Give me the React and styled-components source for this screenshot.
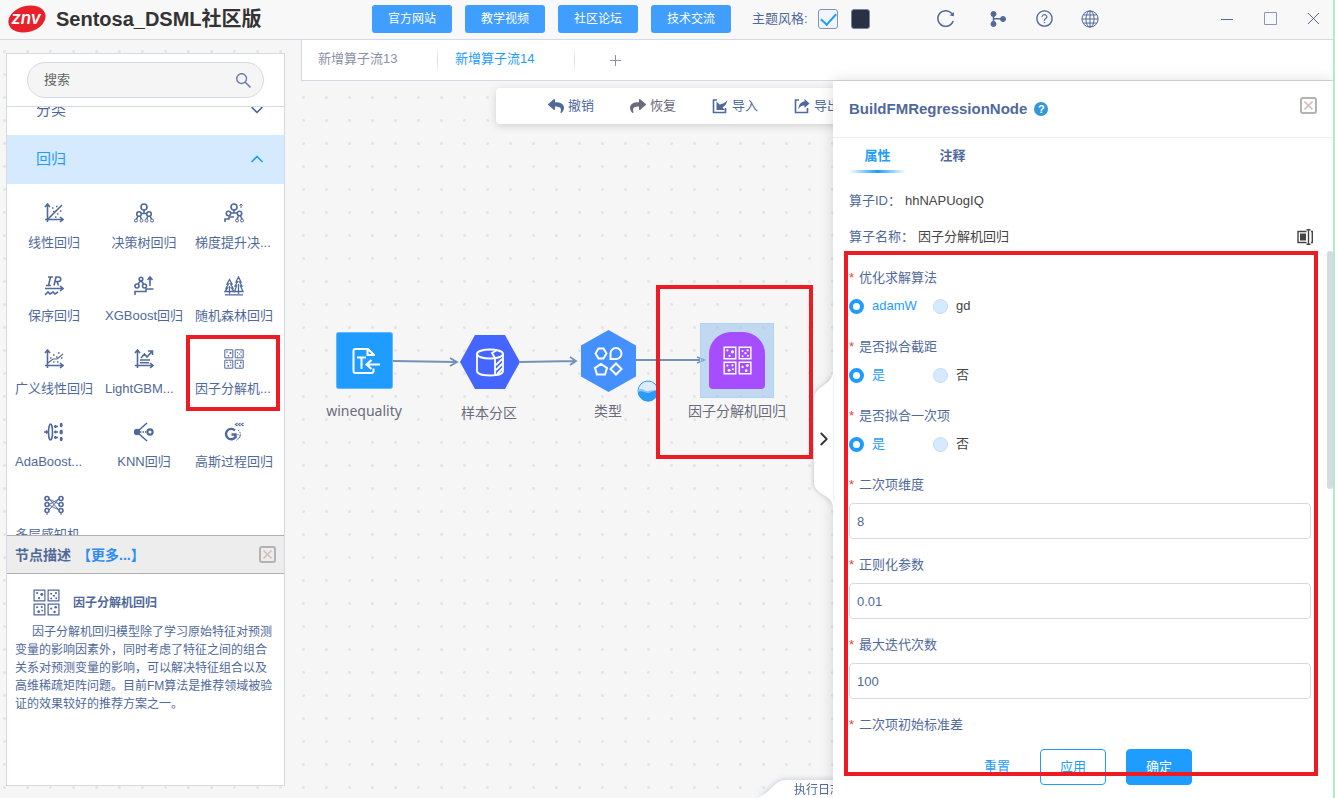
import React, { useState } from "react";
import styled, { createGlobalStyle } from "styled-components";
import { AiOutlineSearch, AiOutlineReload, AiOutlineQuestionCircle } from "react-icons/ai";
import { FaReply, FaShare } from "react-icons/fa";
import { FiChevronDown, FiChevronUp, FiChevronRight } from "react-icons/fi";

const GlobalStyle = createGlobalStyle`
* {
  box-sizing: border-box;
}

body {
  margin: 0;
  font-family: "Liberation Sans", "Noto Sans CJK SC", sans-serif;
  font-size: 13px;
  line-height: 18px;
  color: #50699b;
}

button, input {
  font: inherit;
  color: inherit;
  margin: 0;
}

button {
  padding: 0;
  border: none;
  background: none;
  cursor: pointer;
}

svg {
  display: block;
  flex: none;
}
`;

/* ---------- icons ---------- */

const Line = ({ size = 20, width = 1.6, children }) => (
  <svg width={size} height={size} viewBox="0 0 20 20" fill="none" stroke="currentColor" strokeWidth={width}>
    {children}
  </svg>
);

const Axes = () => <path d="M3.5 1v18M1 16.5h17M1 4l2.500-3L6 4M16 14l3 2.500-3 2.500" />;

const LinearIcon = () => (
  <Line>
    <Axes />
    <path d="M4 16L18 2" />
    <path d="M8 5h1.500M12 3.500h1.500M9 8.500h1.500M13 11h1.500M16 8h1.500M11 14h1.500" strokeWidth="1.300" />
  </Line>
);

const TreeIcon = () => (
  <Line>
    <circle cx="10" cy="4" r="3" />
    <circle cx="5" cy="11" r="2.300" />
    <circle cx="15" cy="11" r="2.300" />
    <path d="M10 7v3M7 10.500h6M4 13l-1.500 3M6 13l1.500 3M14 13l-1.500 3M16 13l1.500 3" />
    <g strokeWidth="1">
      <circle cx="2" cy="17.500" r="1.500" />
      <circle cx="7.500" cy="17.500" r="1.500" />
      <circle cx="12.500" cy="17.500" r="1.500" />
      <circle cx="18" cy="17.500" r="1.500" />
    </g>
  </Line>
);

const GradientTreeIcon = () => (
  <Line>
    <circle cx="10" cy="4" r="3" />
    <circle cx="4.500" cy="10.500" r="2.200" />
    <circle cx="15.500" cy="10.500" r="2.200" />
    <path d="M10 7v3M7 10h6M1 19v-3h4v-2h5M14.500 13l-1.500 3M16.500 13l1.500 3" />
    <path d="M17 5V1M15.500 2.500L17 1l1.500 1.500" strokeWidth="1" />
    <circle cx="13" cy="17.500" r="1.500" strokeWidth="1" />
    <circle cx="18" cy="17.500" r="1.500" strokeWidth="1" />
  </Line>
);

const IsotonicIcon = () => (
  <Line>
    <path d="M4 1h5M2 9.500h5M6.500 1l-2 8.500M10 9.500L12 1h2.500a2 2 0 0 1 0 4.500H11M13 5.500l1.500 4" />
    <path d="M1 12.500h17M16 10l3 2.500-3 2.500M1 19l3-3 2 2 3-2 2 2 3-2" />
  </Line>
);

const XGBoostIcon = () => (
  <Line>
    <circle cx="7" cy="3" r="1.800" />
    <circle cx="3" cy="10" r="2" />
    <circle cx="10.500" cy="10" r="2" />
    <path d="M6.500 5L4 8M7.500 5l2 3M16 10V1.500M13.500 4L16 1l2.500 3M1 19v-3.500h11V13h7.500" />
  </Line>
);

const ForestIcon = () => (
  <Line width={1.3}>
    <path d="M5.500 3.500L3 8h1.500L2 12h1.500L1 15.500h9L7.500 12H9L6.500 8H8zM5.500 10v8" />
    <path d="M14.500 1L12 6h1.500L11 10h1.500l-2 5.500H19L16.500 10H18l-2.500-4H17zM14.500 8v10M1 18.800h18" />
  </Line>
);

const GeneralLinearIcon = () => (
  <Line>
    <Axes />
    <path d="M4 14l5-4h4l6-5" strokeWidth="1.100" />
    <path d="M6 9h1.500M9 6h1.500M14 4h1.500M9 13h1.500M13 13h1.500M17 9h1.500M12 8h1.500" strokeWidth="1.300" />
  </Line>
);

const LightGBMIcon = () => (
  <Line>
    <Axes />
    <path d="M7 9l3.500-4 2.500 3 5-5.500M14 2h4.500v4M6 11h10M6 13.800h9" />
  </Line>
);

const FMIcon = ({ size = 20, width = 1 }) => (
  <Line size={size} width={width}>
    <path d="M.8.8h8v8h-8zM11.200.8h8v8h-8zM.8 11.200h8v8h-8zM11.200 11.200h8v8h-8z" />
    <g fill="currentColor" stroke="none">
      <circle cx="3" cy="3" r=".8" />
      <circle cx="6.500" cy="4" r="1.100" />
      <circle cx="4.500" cy="6.800" r=".8" />
      <circle cx="13.500" cy="3.500" r=".7" />
      <circle cx="17" cy="3" r=".8" />
      <circle cx="15.500" cy="5" r=".8" />
      <circle cx="13.500" cy="7" r=".7" />
      <circle cx="17.200" cy="6.800" r=".7" />
      <circle cx="3" cy="13.500" r=".8" />
      <circle cx="6.500" cy="13.300" r=".8" />
      <circle cx="4.200" cy="16.800" r="1" />
      <circle cx="6.800" cy="16" r=".7" />
      <circle cx="16.800" cy="13.500" r="1" />
      <circle cx="13.500" cy="14.500" r=".8" />
      <circle cx="16" cy="17" r=".9" />
    </g>
  </Line>
);

const AdaBoostIcon = () => (
  <Line>
    <path d="M0 10h3M2 8.500L3.500 10 2 11.500M10 4.500h4M10 10h4M10 15.500h4" />
    <ellipse cx="6.500" cy="10" rx="2" ry="8" />
    <path d="M11.500 3v3M11.500 8.500v3M11.500 14v3" />
    <ellipse cx="17.200" cy="3" rx="1.500" ry="2.300" fill="currentColor" stroke="none" />
    <ellipse cx="17.200" cy="10" rx="1.700" ry="2.500" fill="currentColor" stroke="none" />
    <ellipse cx="17.200" cy="17" rx="1.500" ry="2.300" fill="currentColor" stroke="none" />
  </Line>
);

const KNNIcon = () => (
  <Line>
    <circle cx="3" cy="10" r="2.400" fill="currentColor" />
    <circle cx="16" cy="10" r="2.600" strokeWidth="2.200" />
    <path d="M4 9l9-8M4 11l9 8" />
    <path d="M6 10h6" strokeDasharray="1.500 1" />
  </Line>
);

const GaussIcon = () => (
  <Line>
    <path d="M11 8.500A5.200 5.200 0 1 0 11.500 15v-2.500H7.500" strokeWidth="2.400" />
    <path d="M13.500 1L11.500 2.500l2 1.500M16.500 1l-2 1.500 2 1.500M19.500 1l-2 1.500 2 1.500" strokeWidth="1.200" />
    <path d="M14 8c4 3 3 8-2 10.500" strokeDasharray="1.500 1" strokeWidth="1" />
    <circle cx="14" cy="14.500" r="2" strokeDasharray="1 1" strokeWidth="1" />
  </Line>
);

const PerceptronIcon = () => (
  <Line>
    {[3.5, 9.5, 15.5].map((y) => (
      <g key={y}>
        <circle cx="3" cy={y} r="2" />
        <circle cx="17" cy={y} r="2" />
      </g>
    ))}
    <path d="M5 4l10 11M5 15L15 4M5 10l10 5M5 9.500L15 4M5 4l10 5M3 17.500V20M17 17.500V20" strokeWidth="1" />
  </Line>
);

const Logo = () => (
  <svg width="38" height="30" viewBox="0 0 38 30">
    <ellipse cx="19" cy="15" rx="19" ry="13" fill="#e8202a" transform="rotate(-16 19 15)" />
    <text x="18" y="20" fill="#fff" fontFamily="Inter, sans-serif" fontSize="17" fontWeight="600" fontStyle="italic" textAnchor="middle">
      znv
    </text>
  </svg>
);

const BranchIcon = () => (
  <svg width="16" height="16" viewBox="0 0 16 16" fill="currentColor" stroke="currentColor">
    <circle cx="3.500" cy="3" r="2.500" />
    <circle cx="3.500" cy="13" r="2.500" />
    <circle cx="13" cy="8" r="2.500" />
    <path d="M3.500 3v10M3.500 7.500L13 8" strokeWidth="1.500" />
  </svg>
);

const GlobeIcon = () => (
  <Line size={18} width={1.1}>
    <circle cx="10" cy="10" r="9" />
    <ellipse cx="10" cy="10" rx="4.500" ry="9" />
    <path d="M10 1v18M1 10h18M2.500 5.500h15M2.500 14.500h15" />
  </Line>
);

const TransferIcon = ({ out }) => (
  <svg width="16" height="16" viewBox="0 0 16 16" fill="none" stroke="currentColor" strokeWidth="1.600">
    <path d="M5 2H1.500v12.500h12V10" />
    {out ? (
      <path d="M10.500 1l5 4.500-5 4.500V7.500C7.500 7.500 6 8.500 4.500 11c0-4 2-7 6-7.500z" fill="currentColor" stroke="none" />
    ) : (
      <path d="M4.500 3.500v8.500h8.500L10.500 9.500c2.500-1.500 4-3.500 5-7.500-2.500 3-5 4-8 4.500z" fill="currentColor" stroke="none" />
    )}
  </svg>
);

const Cross = () => (
  <svg width="9" height="9" viewBox="0 0 9 9" stroke="#d8bfbf" strokeWidth="1.600">
    <path d="M.5.5l8 8M8.500.5l-8 8" />
  </svg>
);

const RenameIcon = () => (
  <svg width="16" height="16" viewBox="0 0 16 16" fill="none" stroke="#444" strokeWidth="1.400">
    <path d="M9.500 2.500H1v11h8.500M14 2.500h1.300v11H14M9.500.8h4M9.500 15.200h4M11.500 1v14" />
    <path d="M3 4.500h6v7H3z" fill="#444" stroke="none" />
  </svg>
);

/* ---------- data ---------- */

const links = ["官方网站", "教学视频", "社区论坛", "技术交流"];

const operators = [
  { name: "线性回归", Icon: LinearIcon },
  { name: "决策树回归", Icon: TreeIcon },
  { name: "梯度提升决...", Icon: GradientTreeIcon },
  { name: "保序回归", Icon: IsotonicIcon },
  { name: "XGBoost回归", Icon: XGBoostIcon },
  { name: "随机森林回归", Icon: ForestIcon },
  { name: "广义线性回归", Icon: GeneralLinearIcon },
  { name: "LightGBM...", Icon: LightGBMIcon },
  { name: "因子分解机...", Icon: FMIcon, marked: true },
  { name: "AdaBoost...", Icon: AdaBoostIcon },
  { name: "KNN回归", Icon: KNNIcon },
  { name: "高斯过程回归", Icon: GaussIcon },
  { name: "多层感知机...", Icon: PerceptronIcon },
];

const choices = [
  { id: "solver", label: "优化求解算法", options: ["adamW", "gd"] },
  { id: "intercept", label: "是否拟合截距", options: ["是", "否"] },
  { id: "linear", label: "是否拟合一次项", options: ["是", "否"] },
];

const fields = [
  { id: "factor", label: "二次项维度", value: "8" },
  { id: "reg", label: "正则化参数", value: "0.01" },
  { id: "iter", label: "最大迭代次数", value: "100" },
];

const App = () => {
  const [tab, setTab] = useState(1);
  const [picked, setPicked] = useState({ solver: "adamW", intercept: "是", linear: "是" });

  return (
    <Page>
      <GlobalStyle />
      <Header>
        <Brand>
          <Logo />
          <Title>Sentosa_DSML社区版</Title>
        </Brand>
        <Links>
          {links.map((l) => (
            <LinkButton key={l}>{l}</LinkButton>
          ))}
        </Links>
        <Theme>
          <label htmlFor="light">主题风格:</label>
          <CheckBox id="light" type="checkbox" defaultChecked />
          <Swatch aria-label="深色" />
        </Theme>
        <Tools>
          <ToolButton aria-label="刷新"><AiOutlineReload size={21} /></ToolButton>
          <ToolButton aria-label="流程"><BranchIcon /></ToolButton>
          <ToolButton aria-label="帮助"><AiOutlineQuestionCircle size={19} /></ToolButton>
          <ToolButton aria-label="语言"><GlobeIcon /></ToolButton>
        </Tools>
        <WindowTools>
          <ToolButton aria-label="最小化">
            <svg width="13" height="13" stroke="currentColor"><path d="M0 7.500h12" /></svg>
          </ToolButton>
          <ToolButton aria-label="最大化">
            <svg width="13" height="13" stroke="#8c96bb" fill="none"><path d="M.5.5h12v12H.5z" /></svg>
          </ToolButton>
          <ToolButton aria-label="关闭">
            <svg width="13" height="13" stroke="currentColor"><path d="M1 1l11 11M12 1L1 12" /></svg>
          </ToolButton>
        </WindowTools>
      </Header>

      <Body>
        <Side>
          <SearchBar>
            <SearchBox>
              <input type="text" placeholder="搜索" aria-label="搜索" />
              <AiOutlineSearch size={19} color="#6b7db3" />
            </SearchBox>
          </SearchBar>
          <Palette>
            <Category $first>
              分类 <FiChevronDown size={20} />
            </Category>
            <Category $open>
              回归 <FiChevronUp size={20} />
            </Category>
            <Grid>
              {operators.map(({ name, Icon, marked }) => (
                <Operator key={name} $cut={name.endsWith("...")}>
                  <Icon />
                  <span>{name}</span>
                  {marked && <OperatorMark />}
                </Operator>
              ))}
            </Grid>
          </Palette>
          <InfoHead>
            <b>节点描述</b>
            <a href="#more">【更多...】</a>
            <CloseButton aria-label="关闭描述"><Cross /></CloseButton>
          </InfoHead>
          <Info>
            <InfoTitle>
              <FMIcon size={27} width={0.9} />
              <b>因子分解机回归</b>
            </InfoTitle>
            <p>
              因子分解机回归模型除了学习原始特征对预测变量的影响因素外，同时考虑了特征之间的组合关系对预测变量的影响，可以解决特征组合以及高维稀疏矩阵问题。目前FM算法是推荐领域被验证的效果较好的推荐方案之一。
            </p>
          </Info>
        </Side>

        <Main>
          <Flows>
            {["新增算子流13", "新增算子流14"].map((t, i) => (
              <Flow key={t} $active={tab === i} onClick={() => setTab(i)}>{t}</Flow>
            ))}
            <AddFlow aria-label="新增">
              <svg width="11" height="11" stroke="currentColor"><path d="M5.500 0v11M0 5.500h11" /></svg>
            </AddFlow>
          </Flows>

          <Work>
            <Canvas>
              <ActionBar>
                <Action><FaReply size={16} />撤销</Action>
                <Action $muted><FaShare size={16} />恢复</Action>
                <Action><TransferIcon />导入</Action>
                <Action><TransferIcon out />导出</Action>
              </ActionBar>

              <Edges width="420" height="330" fill="none" stroke="#7492b8" strokeWidth="1.800">
                <path d="M92 280l63 1M149 277l7 4-7 4" />
                <path d="M219 281l55-1M269 276l6 4-6 4" />
                <path d="M335 279h67M396 276l7 3-7 3" />
              </Edges>

              <Node $x={35} $y={251}>
                <svg width="57" height="57" fill="none" stroke="#fff" strokeWidth="2">
                  <rect x=".5" y=".5" width="56" height="56" rx="2" fill="#1e9cff" stroke="#62b8ff" strokeWidth="1" />
                  <path d="M38 24v-1l-6-6H19.500a2 2 0 0 0-2 2v20a2 2 0 0 0 2 2h16a2 2 0 0 0 2-2v-2.500M31.500 17v6H38M21 25.500h9M25.500 25.500V37M44 32.500H32M35.500 28l-5 4.500 5 4.500" />
                </svg>
              </Node>
              <NodeName $x={63} $y={321}>winequality</NodeName>

              <Node $x={159} $y={254}>
                <svg width="60" height="54" fill="none" stroke="#fff" strokeWidth="2">
                  <path d="M15 0h30l15 27-15 27H15L0 27z" fill="#4465ff" stroke="none" />
                  <ellipse cx="30" cy="19" rx="13" ry="4.500" />
                  <path d="M17 19v17c0 6 26 6 26 0V19M35 23v17M35 23l-3-5 5-3M36 30l6-6M36 35l7-7M37 39l6-6" strokeWidth="1.800" />
                </svg>
              </Node>
              <NodeName $x={188} $y={323}>样本分区</NodeName>

              <Node $x={280} $y={249}>
                <svg width="55" height="62" fill="none" stroke="#fff" strokeWidth="2">
                  <path d="M27.500 0L55 15.500v31L27.500 62 0 46.500v-31z" fill="#4590ff" stroke="none" />
                  <path d="M17.500 18.500h5l3 5-3 5h-5l-3-5zM29.500 29v-5.500a5.500 5.500 0 1 1 5.500 5.500zM20 34l6 4-2 6.500h-8L14 38zM35 33.500l5.500 5.500-5.500 5.500-5.500-5.500z" />
                </svg>
              </Node>
              <NodeName $x={307} $y={321}>类型</NodeName>

              <Node $x={336} $y={299}>
                <svg width="22" height="22">
                  <circle cx="11" cy="11" r="10" fill="#dcecfa" stroke="#2b9cf5" />
                  <path d="M1 10c5-3 7 2 10 1s6-1 10-1a10 10 0 0 1-20 0z" fill="#8ac6f8" />
                  <path d="M1 12c4-2 7 1 10 1s6-3 10-2a10 10 0 0 1-20 1z" fill="#2b9cf5" />
                </svg>
              </Node>

              <Selected $x={399} $y={242}>
                <Factor><FMIcon size={29} width={1} /></Factor>
              </Selected>
              <NodeName $x={436} $y={321}>因子分解机回归</NodeName>

              <LogTab>
                <svg width="140" height="18" fill="#fff">
                  <path d="M0 18C14 14 16 0 30 0h110v18z" />
                </svg>
                <span>执行日志</span>
              </LogTab>
            </Canvas>

            <Drawer>
              <Handle aria-label="收起">
                <svg width="20" height="134" fill="#fff">
                  <path d="M20 0c-1 14-19 13-19 28v82c0 13 17 12 19 24z" />
                </svg>
                <FiChevronRight size={22} color="#333" />
              </Handle>
              <DrawerHead>
                <h2>BuildFMRegressionNode</h2>
                <Help>?</Help>
                <CloseButton aria-label="关闭面板"><Cross /></CloseButton>
              </DrawerHead>
              <Tabs>
                <Tab $active>属性</Tab>
                <Tab>注释</Tab>
              </Tabs>
              <Row>
                算子ID： <span>hhNAPUogIQ</span>
              </Row>
              <Row>
                算子名称： <span>因子分解机回归</span>
                <Rename aria-label="重命名"><RenameIcon /></Rename>
              </Row>
              <Form>
                {choices.map((c) => (
                  <ChoiceGroup key={c.id}>
                    <Label as="legend">{c.label}</Label>
                    <Options>
                      {c.options.map((o) => (
                        <Option key={o} $on={picked[c.id] === o}>
                          <input
                            type="radio"
                            name={c.id}
                            checked={picked[c.id] === o}
                            onChange={() => setPicked({ ...picked, [c.id]: o })}
                          />
                          {o}
                        </Option>
                      ))}
                    </Options>
                  </ChoiceGroup>
                ))}
                {fields.map((f) => (
                  <Field key={f.id}>
                    <Label htmlFor={f.id}>{f.label}</Label>
                    <input id={f.id} type="text" defaultValue={f.value} />
                  </Field>
                ))}
                <Label as="div">二次项初始标准差</Label>
                <Thumb />
              </Form>
              <Footer>
                <FormButton $text>重置</FormButton>
                <FormButton>应用</FormButton>
                <FormButton $solid>确定</FormButton>
              </Footer>
              <FormMark />
            </Drawer>
            <NodeMark />
          </Work>
        </Main>
      </Body>
    </Page>
  );
};

export default App;

/* ---------- page ---------- */

const Page = styled.div`
height: 100vh;
min-width: 1100px;
display: flex;
flex-direction: column;
border-right: 2px solid #b8e8c6;
overflow: hidden;
background-color: #f6f6f6;
`;

const Header = styled.header`
height: 40px;
flex: none;
display: flex;
align-items: center;
padding: 0 13px 2px 8px;
background-color: #f8f8f8;
border-bottom: 1px solid #d5d9e5;
`;

const Brand = styled.div`
flex: 0 0 364px;
display: flex;
align-items: center;
gap: 10px;
`;

const Title = styled.h1`
margin: 0;
font-size: 20px;
line-height: 28px;
color: #333;
white-space: nowrap;
`;

const Links = styled.nav`
display: flex;
gap: 13px;
`;

const LinkButton = styled.button`
width: 80px;
height: 28px;
border-radius: 3px;
background-color: #409eff;
color: white;
font-size: 12px;
`;

const Theme = styled.div`
display: flex;
align-items: center;
margin-left: 21px;

label {
  width: 66px;
}
`;

const CheckBox = styled.input`
appearance: none;
width: 20px;
height: 20px;
border: 1px solid #8593b8;
border-radius: 3px;
background-color: #f0f5ff;
display: flex;
justify-content: center;

&:checked::after {
  content: "";
  width: 7px;
  height: 13px;
  border: solid #1e9cff;
  border-width: 0 2px 2px 0;
  transform: rotate(42deg);
}
`;

const Swatch = styled.button`
width: 19px;
height: 20px;
margin-left: 13px;
border: 1px solid #7a829c;
border-radius: 3px;
background-color: #293145;
`;

const Tools = styled.div`
display: flex;
margin-left: 52px;

button {
  width: 46px;
}

button:first-child {
  width: 53px;
  padding-right: 6px;
}
`;

const ToolButton = styled.button`
height: 24px;
display: flex;
align-items: center;
justify-content: center;
`;

const WindowTools = styled.div`
display: flex;
gap: 30px;
margin-left: auto;
`;

const Body = styled.div`
flex: 1;
min-height: 0;
display: flex;
background-image: radial-gradient(circle, #e5e5e5 0 1px, transparent 2px);
background-size: 23px 23px;
background-position: -7px 0;
`;

/* ---------- left panel ---------- */

const Side = styled.aside`
width: 279px;
flex: none;
margin: 13px 16px 12px 6px;
display: flex;
flex-direction: column;
border: 1px solid #d5d9e5;
background-color: white;
`;

const SearchBar = styled.div`
flex: none;
padding: 8px 20px;
border-bottom: 1px solid #d5d9e5;
`;

const SearchBox = styled.div`
height: 36px;
display: flex;
align-items: center;
padding: 0 10px 0 16px;
border: 1px solid #d5d9e5;
border-radius: 18px;
background-color: #f5f5f5;

input {
  flex: 1;
  min-width: 0;
  padding: 0;
  border: none;
  outline: none;
  background: none;
}

input::placeholder {
  color: #666;
}
`;

const Palette = styled.div`
flex: 1;
min-height: 0;
overflow: hidden;
`;

const Category = styled.div`
height: 49px;
margin-top: ${(p) => (p.$first ? "-21px" : "0")};
padding: 0 17px 2px 29px;
display: flex;
align-items: center;
justify-content: space-between;
font-size: 15px;
color: ${(p) => (p.$open ? "#1e9cff" : "#50699b")};
background-color: ${(p) => (p.$open ? "#d6eaff" : "white")};
`;

const Grid = styled.div`
display: grid;
grid-template-columns: repeat(3, 90px);
grid-auto-rows: 73px;
padding-left: 2px;
`;

const Operator = styled.div`
position: relative;
display: flex;
flex-direction: column;
align-items: center;
padding-top: 19px;
gap: 11px;
cursor: pointer;
white-space: nowrap;

span {
  width: 78px;
  text-align: ${(p) => (p.$cut ? "left" : "center")};
}
`;

const OperatorMark = styled.div`
position: absolute;
left: -3px;
top: 5px;
width: 94px;
height: 76px;
border: 4px solid #ed1c24;
`;

const InfoHead = styled.div`
height: 39px;
flex: none;
display: flex;
align-items: center;
gap: 6px;
padding: 0 8px;
font-size: 14px;
background-color: #ededed;
border: solid #b0b0b0;
border-width: 1px 0;

a {
  color: #2d8cf0;
  font-weight: bold;
  text-decoration: none;
}
`;

const CloseButton = styled.button`
width: 17px;
height: 17px;
margin-left: auto;
display: flex;
align-items: center;
justify-content: center;
border: 2px solid #b3b3b3;
border-radius: 3px;
`;

const Info = styled.div`
height: 211px;
flex: none;
padding: 15px 9px 0 8px;
font-size: 12px;

p {
  margin: 7px 0 0;
  text-indent: 17px;
}
`;

const InfoTitle = styled.div`
display: flex;
align-items: center;
gap: 13px;
padding-left: 18px;
`;

/* ---------- flows and canvas ---------- */

const Main = styled.main`
flex: 1;
min-width: 0;
display: flex;
flex-direction: column;
`;

const Flows = styled.div`
height: 41px;
flex: none;
display: flex;
background-color: white;
border: solid #d5d9e5;
border-width: 0 0 1px 1px;
`;

const Flow = styled.button`
width: 137px;
padding: 0 0 2px 16px;
text-align: left;
color: ${(p) => (p.$active ? "#1e9cff" : "#8a90a5")};
background: linear-gradient(transparent, #d5d9e5, transparent) right 1px center / 1px 28px no-repeat;
`;

const AddFlow = styled.button`
padding-left: 34px;
color: #8a90a5;
`;

const Work = styled.div`
position: relative;
flex: 1;
min-height: 0;
display: flex;
`;

const Canvas = styled.section`
position: relative;
flex: 1;
min-width: 0;
overflow: hidden;
`;

const ActionBar = styled.div`
width: 430px;
height: 36px;
margin: 7px 0 0 195px;
padding-left: 52px;
display: flex;
border-radius: 4px;
background-color: white;
box-shadow: 0 2px 8px rgba(0, 0, 0, 0.15);
`;

const Action = styled.button`
width: 82px;
flex: none;
display: flex;
align-items: center;
gap: 4px;
color: ${(p) => (p.$muted ? "#6b6b7b" : "#50699b")};
`;

const Edges = styled.svg`
position: absolute;
left: 0;
top: 0;
`;

const Node = styled.div`
position: absolute;
left: ${(p) => p.$x}px;
top: ${(p) => p.$y}px;
`;

const Selected = styled(Node)`
padding: 8px;
border: 1px solid #b3d2fa;
background-color: rgba(150, 192, 236, 0.55);
`;

const Factor = styled.div`
width: 56px;
height: 57px;
display: flex;
align-items: center;
justify-content: center;
color: white;
border-radius: 22px 22px 4px 4px;
background-color: #a64dff;
`;

const NodeName = styled.div`
position: absolute;
left: ${(p) => p.$x}px;
top: ${(p) => p.$y}px;
transform: translateX(-50%);
font-family: "Noto Sans", "Noto Sans CJK SC", sans-serif;
font-size: 14px;
color: #6b6b7b;
white-space: nowrap;
`;

const NodeMark = styled.div`
position: absolute;
left: 355px;
top: 204px;
width: 157px;
height: 174px;
border: 4px solid #ed1c24;
pointer-events: none;
`;

const LogTab = styled.div`
position: absolute;
left: 456px;
bottom: 0;
filter: drop-shadow(0 0 3px rgba(80, 105, 155, 0.35));
font-size: 12px;

span {
  position: absolute;
  left: 37px;
  top: 1px;
  white-space: nowrap;
}
`;

/* ---------- drawer ---------- */

const Drawer = styled.section`
position: relative;
width: 500px;
flex: none;
display: flex;
flex-direction: column;
background-color: white;
box-shadow: 0 0 14px rgba(0, 0, 0, 0.14);
`;

const Handle = styled.button`
position: absolute;
left: -20px;
top: 291px;
display: flex;
align-items: center;
filter: drop-shadow(-1px 0 2px rgba(60, 70, 120, 0.25));

svg + svg {
  position: absolute;
  left: 0;
}
`;

const DrawerHead = styled.div`
height: 57px;
flex: none;
display: flex;
align-items: center;
gap: 7px;
padding: 0 16px;
border-bottom: 1px solid #eee;

h2 {
  margin: 0;
  font-size: 15px;
}

button {
  margin-bottom: 8px;
}
`;

const Help = styled.span`
width: 14px;
height: 14px;
border-radius: 7px;
background-color: #3296d8;
color: white;
font-size: 11px;
line-height: 14px;
font-weight: bold;
text-align: center;
`;

const Tabs = styled.div`
height: 45px;
flex: none;
display: flex;
gap: 18px;
padding-left: 16px;
`;

const Tab = styled.button`
width: 57px;
height: 35px;
font-weight: bold;
color: ${(p) => (p.$active ? "#1e9cff" : "#50699b")};
background: ${(p) => (p.$active ? "linear-gradient(90deg, transparent, #1e9cff, transparent) bottom / 100% 3px no-repeat" : "none")};
`;

const Row = styled.div`
height: 36px;
flex: none;
display: flex;
align-items: center;
padding: 0 20px 0 16px;

span {
  margin-left: 4px;
  color: #444;
}
`;

const Rename = styled.button`
margin-left: auto;
`;

const Form = styled.form`
position: relative;
flex: 1;
min-height: 0;
margin-top: -4px;
overflow: hidden;
padding: 13px 22px 0 16px;
`;

const ChoiceGroup = styled.fieldset`
height: 69px;
margin: 0;
padding: 0;
border: none;
`;

const Label = styled.label`
display: block;
padding: 0;
line-height: 28px;

&::before {
  content: "*";
  display: inline-block;
  width: 10px;
  color: #ff3b30;
}
`;

const Options = styled.div`
display: grid;
grid-template-columns: repeat(2, 84px);
`;

const Option = styled.label`
height: 28px;
display: flex;
align-items: center;
gap: 8px;
color: ${(p) => (p.$on ? "#1e9cff" : "#444")};

input {
  appearance: none;
  width: 15px;
  height: 15px;
  border: ${(p) => (p.$on ? "4px solid #1e9cff" : "1px solid #c6dcf2")};
  border-radius: 50%;
  background-color: ${(p) => (p.$on ? "white" : "#d6eaff")};
}
`;

const Field = styled.div`
height: 80px;

input {
  width: 100%;
  height: 36px;
  margin-top: 4px;
  padding: 0 7px;
  border: 1px solid #d5d9e5;
  border-radius: 4px;
  outline: none;
}
`;

const Thumb = styled.div`
position: absolute;
right: 0;
top: 0;
width: 6px;
height: 238px;
border-radius: 3px;
background-color: #d5dae3;
`;

const Footer = styled.div`
flex: none;
display: flex;
justify-content: center;
gap: 20px;
padding-bottom: 13px;
`;

const FormButton = styled.button`
width: ${(p) => (p.$text ? "46px" : "66px")};
height: 36px;
border-radius: 4px;
border: 1px solid ${(p) => (p.$text ? "transparent" : "#1e9cff")};
color: ${(p) => (p.$solid ? "white" : "#1e9cff")};
background-color: ${(p) => (p.$solid ? "#1e9cff" : "transparent")};
`;

const FormMark = styled.div`
position: absolute;
left: 11px;
right: 15px;
top: 170px;
bottom: 22px;
border: 4px solid #ed1c24;
pointer-events: none;
`;
